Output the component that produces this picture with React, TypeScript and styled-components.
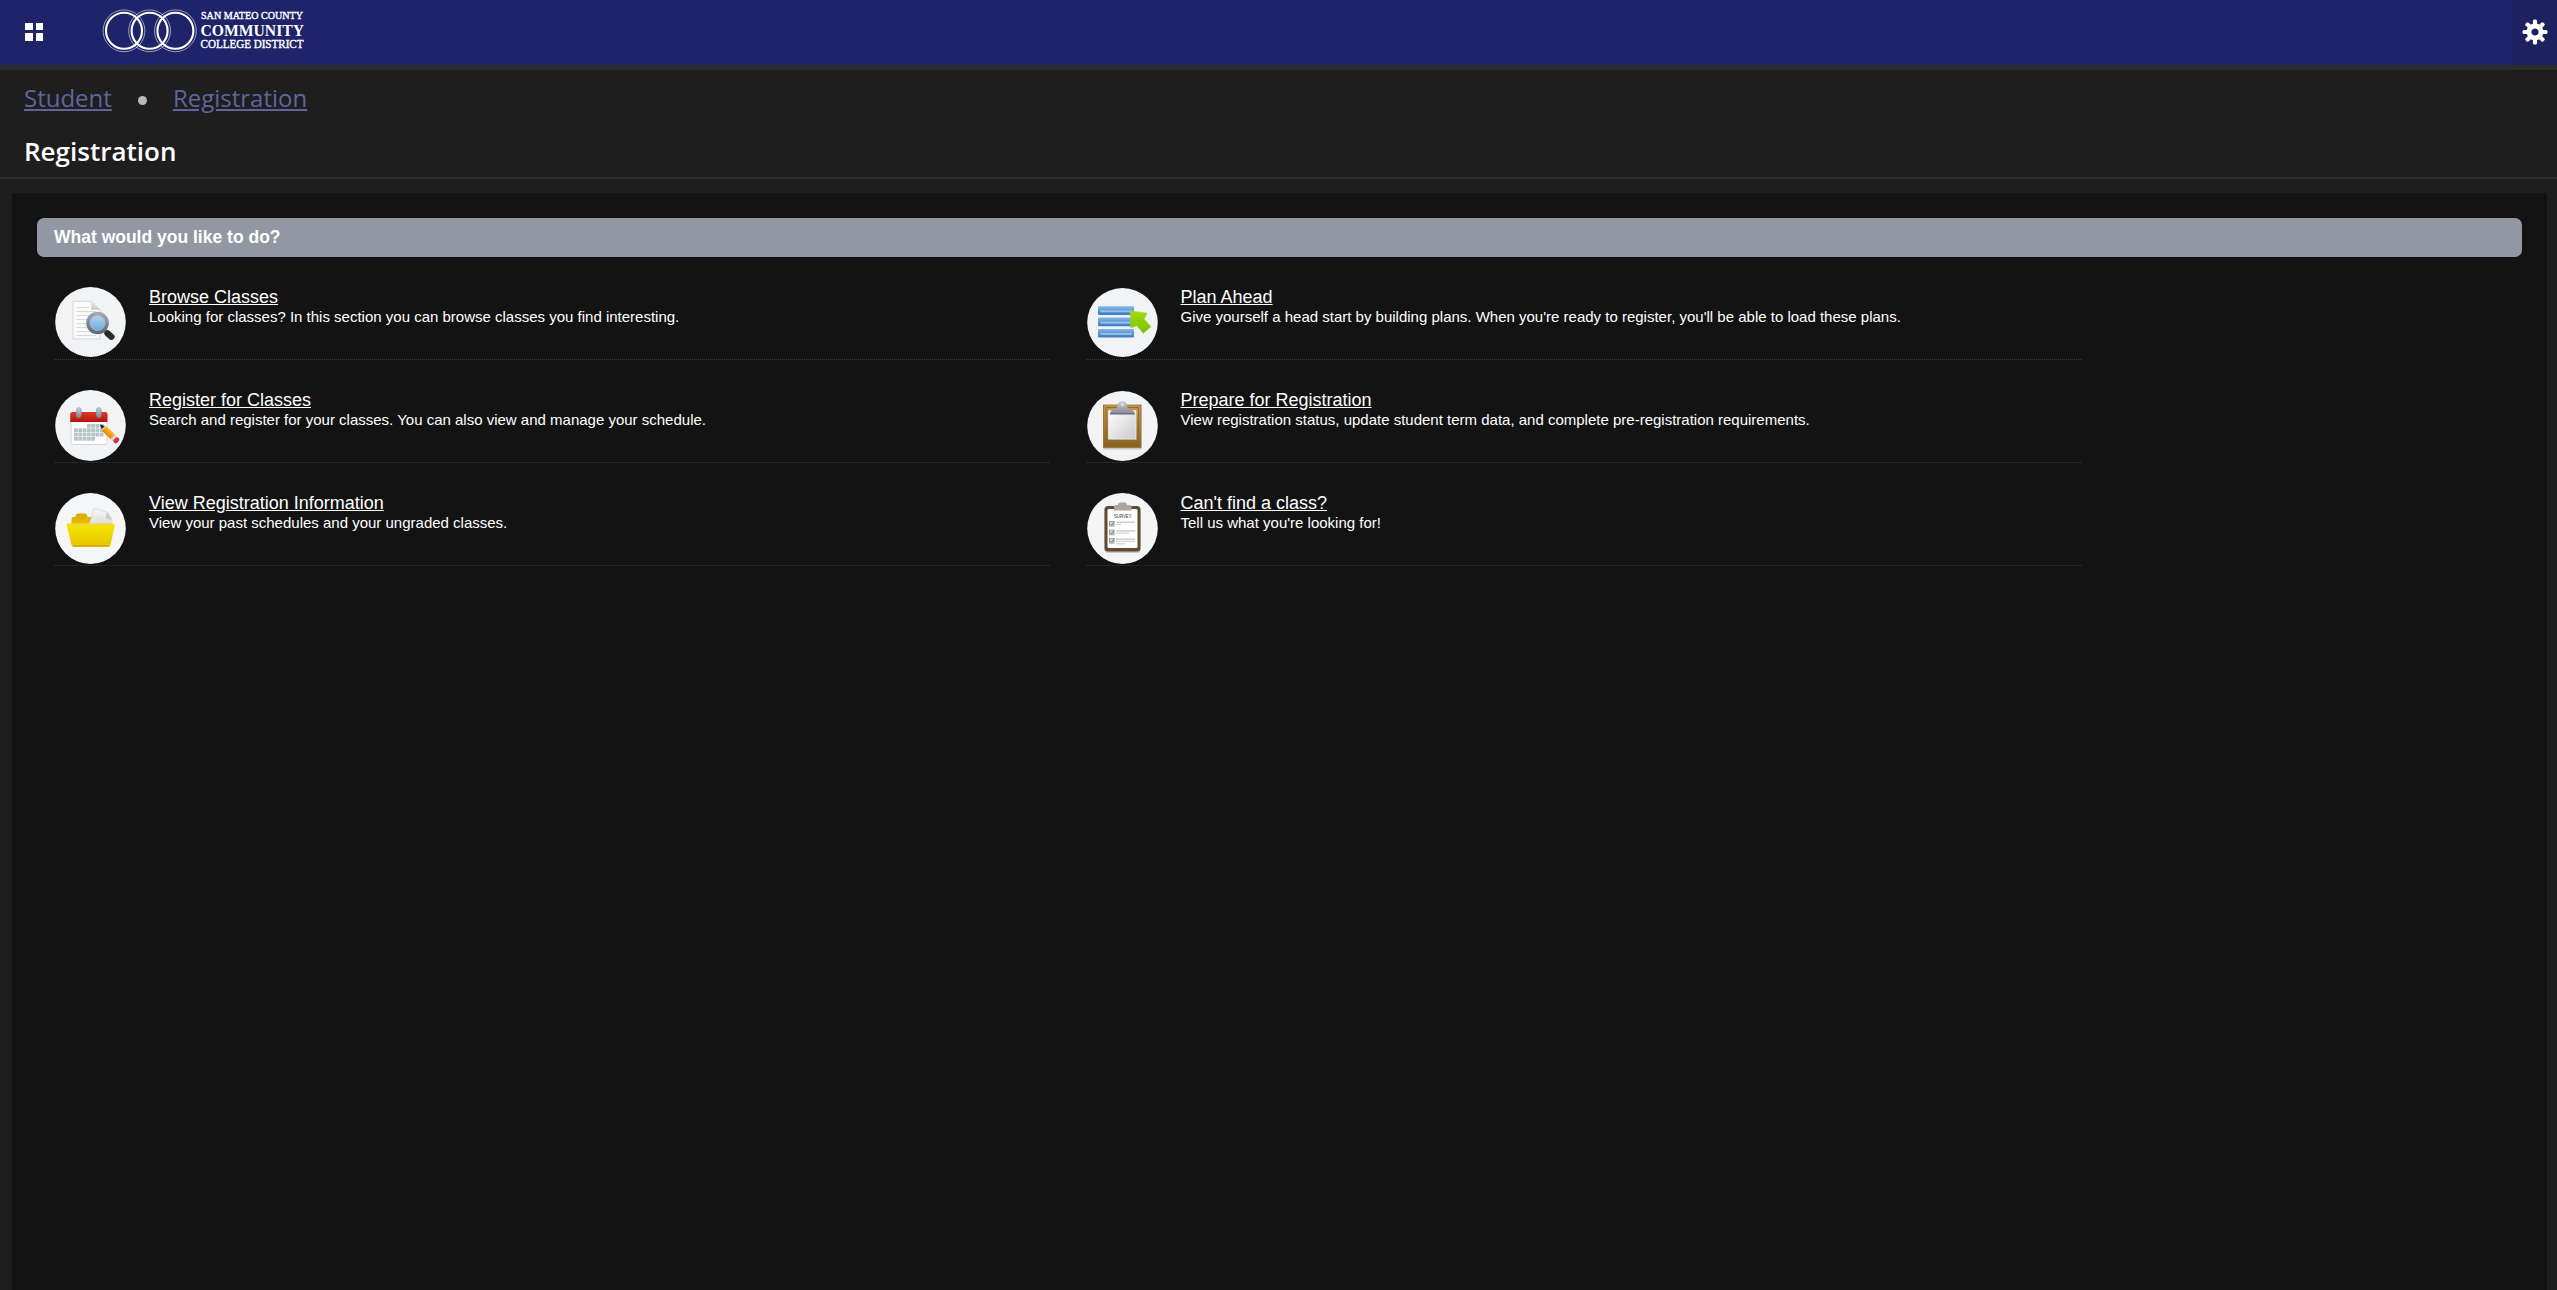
import React from "react";
import styled, { createGlobalStyle } from "styled-components";

const Global = createGlobalStyle`
  html, body { margin: 0; background: #1e1e1e; }
  body { overflow: hidden; }
  * { box-sizing: border-box; }
`;

const Page = styled.div`
  height: 100vh;
  display: flex;
  flex-direction: column;
  font-family: "Liberation Sans", Arial, sans-serif;
  color: #fff;
`;

const TopBar = styled.header`
  flex: none;
  height: 70px;
  display: flex;
  align-items: stretch;
  background: #1f2369;
  border-bottom: 5px solid #2b2b2b;
`;

const MenuButton = styled.button`
  display: grid;
  grid-template-columns: 7.5px 7.5px;
  grid-auto-rows: 7.5px;
  gap: 3px;
  padding: 22.5px 0 0 25px;
  width: 100px;
  border: 0;
  background: none;
`;

const Tile = styled.span`
  background: #fff;
`;

const LogoDrawing = styled.svg`
  flex: none;
  display: block;
  overflow: visible;
`;

const SettingsButton = styled.button`
  margin-left: auto;
  width: 45px;
  padding: 18.5px 0 0 10px;
  display: flex;
  align-items: flex-start;
  border: 0;
  background: #1e215f;
`;

const Crumbs = styled.nav`
  flex: none;
  height: 58px;
  padding: 11px 0 0 24px;
  display: flex;
  align-items: flex-start;
  font: 24px/33px "Open Sans", sans-serif;
`;

const Crumb = styled.a`
  color: #5f659c;
  text-decoration: underline;
`;

const Dot = styled.span`
  width: 9px;
  height: 9px;
  margin: 15px 26px 0 26px;
  border-radius: 50%;
  background: #b9b9b9;
`;

const PageTitle = styled.h1`
  flex: none;
  margin: 0;
  height: 51px;
  padding: 5px 0 0 24px;
  border-bottom: 2px solid #2b2b2b;
  font: 600 26px/36px "Open Sans", sans-serif;
`;

const Panel = styled.main`
  flex: 1;
  margin: 14px 10px 0 12px;
  padding: 25px 25px 0;
  background: #131313;
`;

const SectionHeading = styled.h2`
  margin: 0;
  height: 39px;
  padding-left: 17px;
  border-radius: 7px;
  background: #9297a3;
  font-size: 17.5px;
  line-height: 39px;
`;

const Options = styled.div`
  display: grid;
  grid-template-columns: 994px 994px;
  grid-auto-rows: 103px;
  column-gap: 37.5px;
  padding-left: 18px;
`;

const Option = styled.div`
  display: flex;
  align-items: flex-end;
  gap: 23px;
  border-bottom: 1px dotted #383838;
`;

const OptionText = styled.div`
  align-self: flex-start;
  padding-top: 30px;
`;

const OptionLink = styled.a`
  display: block;
  font-size: 18px;
  line-height: 20px;
  text-decoration: underline;
`;

const OptionNote = styled.p`
  margin: 0;
  font-size: 15px;
  line-height: 20px;
`;

const Icon = styled.svg<{ $lift: number }>`
  flex: none;
  display: block;
  margin-bottom: ${(p) => p.$lift}px;
`;

function Logo() {
  return (
    <LogoDrawing width="210" height="65" viewBox="0 0 210 65">
      {[24, 49.6, 75.4].map((cx) => (
        <g key={cx} fill="none" stroke="#fff">
          <circle cx={cx} cy="30.8" r="20.9" strokeWidth=".7" opacity=".8" />
          <circle cx={cx} cy="30.8" r="18" strokeWidth="2.1" />
        </g>
      ))}
      <g fill="#fff" stroke="#fff" strokeWidth=".4" fontFamily="'Liberation Serif', serif">
        <text x="101" y="19.3" fontSize="11.2" textLength="102" lengthAdjust="spacingAndGlyphs">SAN MATEO COUNTY</text>
        <text x="100.5" y="35.6" fontSize="17.5" fontWeight="700" strokeWidth="0" textLength="103.5" lengthAdjust="spacingAndGlyphs">COMMUNITY</text>
        <text x="100.5" y="48" fontSize="12" textLength="103" lengthAdjust="spacingAndGlyphs">COLLEGE DISTRICT</text>
      </g>
    </LogoDrawing>
  );
}

function Gear() {
  return (
    <svg width="26" height="26" viewBox="-13 -13 26 26">
      {[0, 45, 90, 135].map((a) => (
        <rect key={a} x="-2.1" y="-12.5" width="4.2" height="25" rx="1.6" fill="#fff" transform={`rotate(${a})`} />
      ))}
      <circle r="6" fill="#1e215f" stroke="#fff" strokeWidth="4.8" />
    </svg>
  );
}

function Grad({ id, from, to, diagonal }: { id: string; from: string; to: string; diagonal?: boolean }) {
  return (
    <linearGradient id={id} x1="0" y1="0" x2={diagonal ? 1 : 0} y2="1">
      <stop offset="0" stopColor={from} />
      <stop offset="1" stopColor={to} />
    </linearGradient>
  );
}

function BrowseArt() {
  return (
    <g transform="translate(0 .8)">
      <defs>
        <Grad id="lens" from="#b5d8f3" to="#6fa5d6" />
        <Grad id="rim" from="#a3a9b2" to="#5f6977" />
        <Grad id="fold" from="#eee" to="#c9c9cb" />
      </defs>
      <path d="M18 14.5H36L45 23V52H18Z" fill="#fafafa" stroke="#dcdcde" strokeWidth="1.2" />
      <path d="M36 14.5V23H45Z" fill="url(#fold)" />
      {[20, 24, 28, 32, 36, 40, 44, 48].map((y) => (
        <path key={y} d={`M21.5 ${y + 0.7}H${y < 24 ? 34 : 41}`} stroke="#d9dadc" strokeWidth="1.1" />
      ))}
      <path d="M49.5 44.5 56.5 50.5" stroke="#808080" strokeWidth="4" />
      <path d="M52.5 46.5 56.5 50" stroke="#2b2b2b" strokeWidth="6.2" strokeLinecap="round" />
      <circle cx="42.5" cy="36.2" r="9.3" fill="url(#lens)" stroke="url(#rim)" strokeWidth="4" />
      <circle cx="42.5" cy="36.2" r="7.5" fill="none" stroke="#a9c3dc" strokeWidth=".8" />
    </g>
  );
}

function CalendarArt() {
  const cells: [number, number][] = [];
  for (let r = 0; r < 4; r++)
    for (let c = 0; c < 7; c++) {
      if (r === 0 && c < 3) continue;
      if (r === 3 && c > 4) continue;
      cells.push([c, r]);
    }
  return (
    <>
      <defs>
        <Grad id="red" from="#e03a28" to="#b41410" />
        <Grad id="ring" from="#c9d3dc" to="#71808f" />
        <Grad id="pencil" from="#ffb92e" to="#e98304" />
      </defs>
      <rect x="16" y="23" width="36" height="31.5" rx="2" fill="#fff" stroke="#d2d2d4" />
      <path d="M15.2 32V24q0-2 2-2H50.5q2 0 2 2v8Z" fill="url(#red)" />
      {cells.map(([c, r]) => (
        <rect key={`${c}-${r}`} x={19 + c * 4.3} y={34 + r * 4.3} width="3.8" height="3.8" fill="#b5c5c5" />
      ))}
      {[23.8, 43.8].map((x) => (
        <rect key={x} x={x - 2.4} y="17.7" width="4.8" height="10" rx="2.4" fill="url(#ring)" stroke="#8794a1" strokeWidth=".6" />
      ))}
      <g transform="translate(45 34.5) rotate(44)">
        <path d="M0 0 7-3.200V3.200Z" fill="#e8c99a" />
        <path d="M0 0 4.500-2.200V2.200Z" fill="#222" />
        <rect x="6" y="-3.200" width="12" height="6.400" fill="url(#pencil)" />
        <rect x="18" y="-3.200" width="3" height="6.400" fill="#d5d8da" />
        <rect x="20.500" y="-3.200" width="4.500" height="6.400" rx="2" fill="#d6343c" />
      </g>
    </>
  );
}

function FolderArt() {
  return (
    <>
      <defs>
        <Grad id="front" from="#f4e800" to="#e8c400" />
        <Grad id="back" from="#dba800" to="#f0c000" />
        <Grad id="sheet" from="#fafafa" to="#d9dadc" />
      </defs>
      <path d="M16.500 34V26q0-2 2-2H20.500q0-3.500 3-3.500h6q3 0 3 3.500h3.500l3 10Z" fill="url(#back)" />
      <path d="M34 32 39 15.500 52 19 57 26V32Z" fill="url(#sheet)" stroke="#d3d3d5" strokeWidth=".8" />
      <path d="M52 19 50.500 25.500 57 27Z" fill="#c9cacc" />
      <path d="M13.500 30.500H57.500q2.500 0 2.200 2.500L55.500 52q-.5 2-2.500 2H19q-2 0-2.500-2L11.800 33q-.8-2.500 1.700-2.500Z" fill="url(#front)" />
      <path d="M14 31.700H57.500" stroke="#f6d63a" strokeWidth="2" />
      <path d="M18 52.800H54" stroke="#d9a900" strokeWidth="1.400" />
    </>
  );
}

function PlanArt() {
  return (
    <>
      <defs>
        <Grad id="bar" from="#83b7e8" to="#3e78c4" />
        <Grad id="arrow" from="#a4dc0a" to="#7cbd00" />
      </defs>
      {[20.3, 31.6, 42.9].map((y) => (
        <g key={y}>
          <rect x="11" y={y} width="36" height="8.600" rx="1.200" fill="url(#bar)" />
          <rect x="13.500" y={y + 4.1} width="31" height="1.800" fill="#9ac2ec" />
        </g>
      ))}
      <path d="M43.300 25 60 27.200 57 33 64 40.700 56.300 47.300 49.600 39.500 44 42Z" fill="url(#arrow)" stroke="#9bd43a" strokeWidth=".7" strokeLinejoin="round" />
    </>
  );
}

function ClipboardArt() {
  return (
    <g transform="translate(0 .6)">
      <defs>
        <Grad id="wood" from="#c69650" to="#866322" />
        <Grad id="page" from="#ffffff" to="#c9cacc" diagonal />
        <Grad id="clip" from="#c5c8cf" to="#858995" />
      </defs>
      <rect x="16.500" y="16" width="38" height="43" fill="#000" opacity=".15" />
      <rect x="16.500" y="14.500" width="37.500" height="42.500" fill="url(#wood)" stroke="#a37430" />
      <rect x="19" y="17" width="32.500" height="37.500" fill="none" stroke="#8a6529" strokeWidth=".8" />
      <rect x="21.500" y="20" width="27.500" height="28.500" fill="url(#page)" stroke="#f3eee2" strokeWidth=".8" />
      <path d="M23 23.500q0-5 7-5.500 0-7.300 5.300-7.300T40.500 18q7 .5 7 5.500Z" fill="url(#clip)" />
      <path d="M22.800 23.300H47.800" stroke="#656975" strokeWidth="1.200" />
      <circle cx="35.300" cy="13.800" r="2" fill="#d5d8dc" />
    </g>
  );
}

function SurveyArt() {
  return (
    <>
      <rect x="17.500" y="14" width="36" height="46" rx="3.500" fill="#aaa" opacity=".6" />
      <rect x="17.500" y="13" width="36" height="45.500" rx="3.500" fill="#604a35" />
      <rect x="20.500" y="16" width="30" height="39" rx="1.500" fill="#fff" />
      <path d="M27 17.500V14q0-2 2-2h2q0-2.500 2.500-2.500h4Q40 9.500 40 12h2.500q2 0 2 2v3.500Z" fill="#a7a99c" />
      <text x="27" y="25" fontSize="5.200" textLength="17.500" lengthAdjust="spacingAndGlyphs" fontFamily="'Liberation Sans', sans-serif" fill="#333">SURVEY</text>
      {[28.5, 37.2, 45.5].map((y, i) => (
        <g key={y}>
          <rect x="22.500" y={y} width="4.600" height="4.600" fill="#ddd" stroke="#999" strokeWidth=".9" />
          <path d={`M23.500 ${y + 2.3}l1.400 1.300 2-3`} fill="none" stroke="#555" strokeWidth=".8" />
          <path d={`M29 ${y + 0.7}H48`} stroke="#cfcfcf" strokeWidth="1.500" />
          <path d={`M29 ${y + 2.9}H${[34, 42, 48][i]}`} stroke="#d5d5d5" strokeWidth="1.300" />
          {i === 2 && <path d={`M29 ${y + 5.2}H38`} stroke="#d5d5d5" strokeWidth="1.300" />}
        </g>
      ))}
    </>
  );
}

const options = [
  { title: "Browse Classes", note: "Looking for classes? In this section you can browse classes you find interesting.", Art: BrowseArt, d: 70, disc: "#f2f3f5", lift: 2 },
  { title: "Plan Ahead", note: "Give yourself a head start by building plans. When you're ready to register, you'll be able to load these plans.", Art: PlanArt, d: 69, disc: "#f2f3f5", lift: 2 },
  { title: "Register for Classes", note: "Search and register for your classes. You can also view and manage your schedule.", Art: CalendarArt, d: 71, disc: "#f1f3f5", lift: 1 },
  { title: "Prepare for Registration", note: "View registration status, update student term data, and complete pre-registration requirements.", Art: ClipboardArt, d: 70, disc: "#f1f3f5", lift: 1 },
  { title: "View Registration Information", note: "View your past schedules and your ungraded classes.", Art: FolderArt, d: 71, disc: "#f5f6f8", lift: 1 },
  { title: "Can't find a class?", note: "Tell us what you're looking for!", Art: SurveyArt, d: 71, disc: "#f5f5f5", lift: 1 },
];

export default function App() {
  return (
    <Page>
      <Global />
      <TopBar>
        <MenuButton aria-label="Menu">
          <Tile /><Tile /><Tile /><Tile />
        </MenuButton>
        <Logo />
        <SettingsButton aria-label="Settings"><Gear /></SettingsButton>
      </TopBar>
      <Crumbs>
        <Crumb>Student</Crumb>
        <Dot />
        <Crumb>Registration</Crumb>
      </Crumbs>
      <PageTitle>Registration</PageTitle>
      <Panel>
        <SectionHeading>What would you like to do?</SectionHeading>
        <Options>
          {options.map(({ title, note, Art, d, disc, lift }) => (
            <Option key={title}>
              <Icon $lift={lift} width="71" height="71" viewBox="0 0 71 71">
                <ellipse cx="35.5" cy={71 - d / 2} rx="35.3" ry={d / 2} fill={disc} />
                <Art />
              </Icon>
              <OptionText>
                <OptionLink>{title}</OptionLink>
                <OptionNote>{note}</OptionNote>
              </OptionText>
            </Option>
          ))}
        </Options>
      </Panel>
    </Page>
  );
}
